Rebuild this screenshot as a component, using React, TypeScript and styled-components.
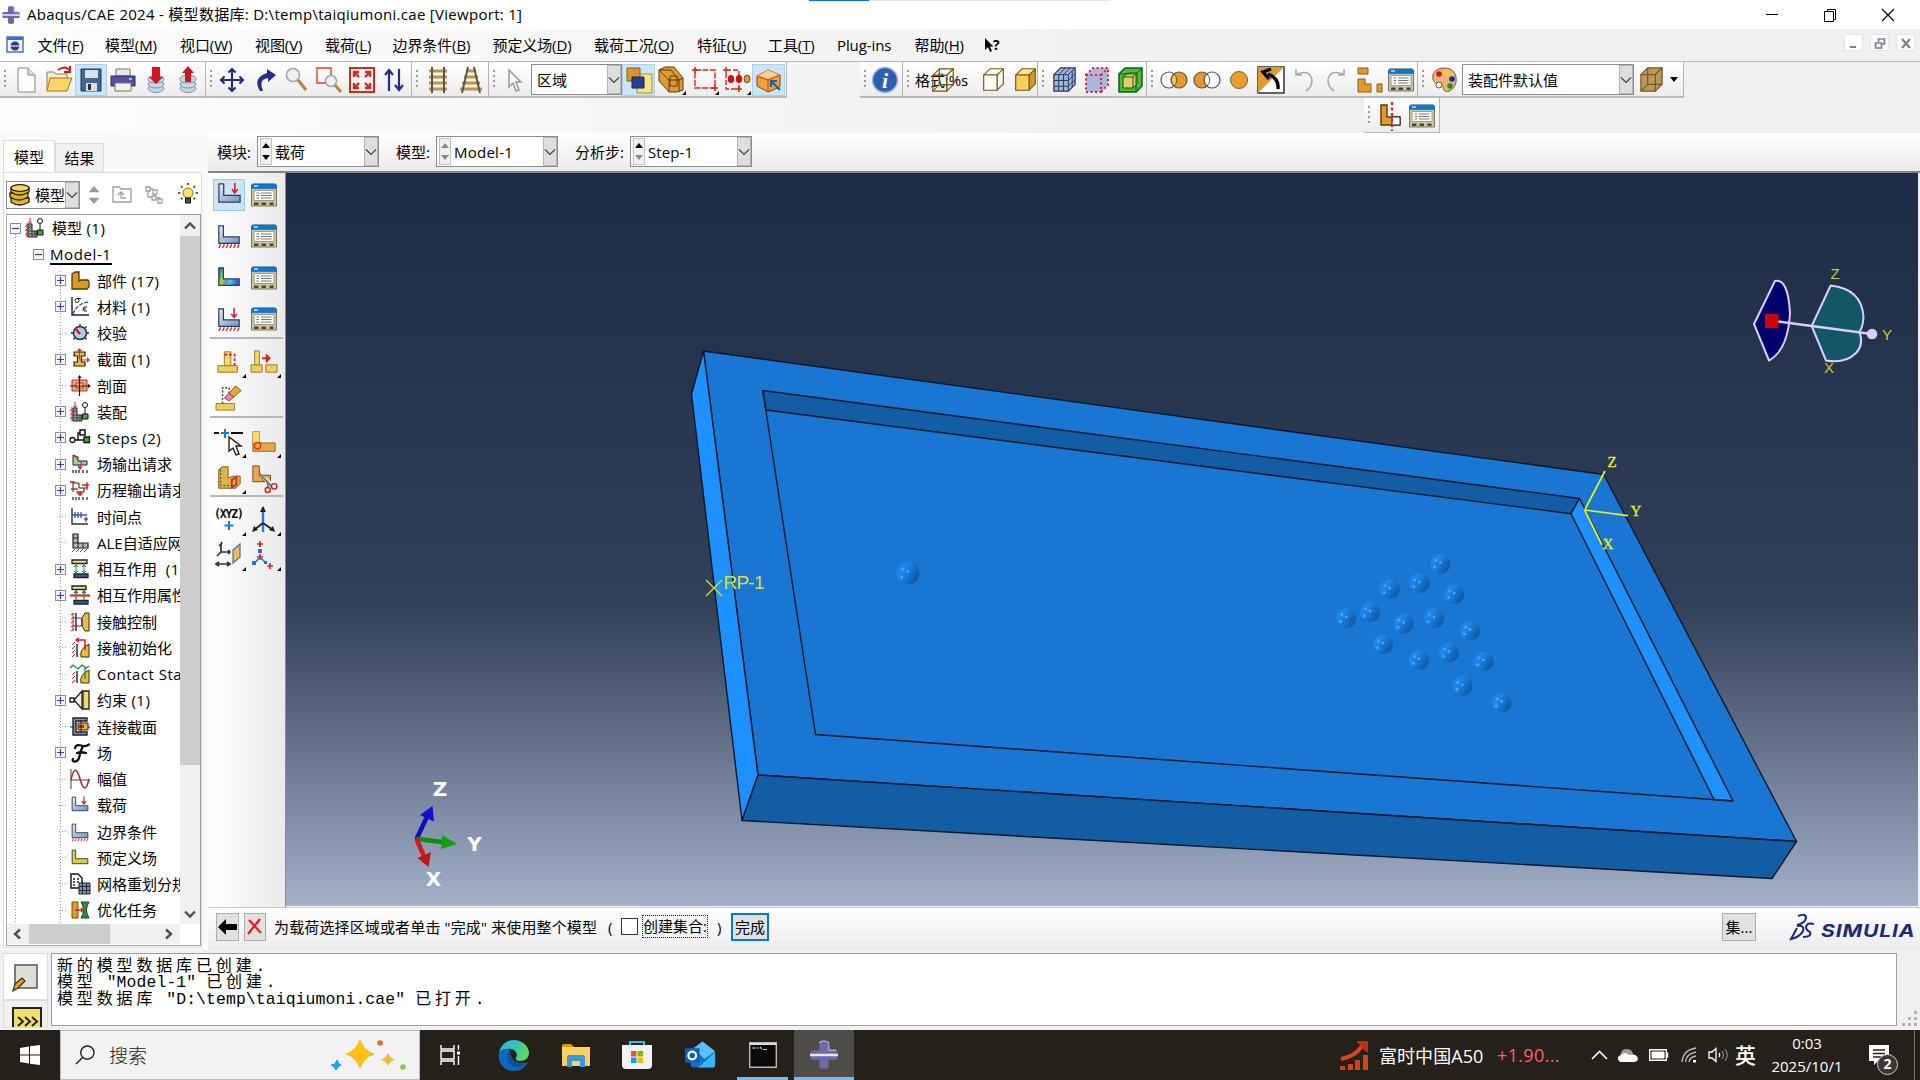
import React from "react";
import styled, { createGlobalStyle, css } from "styled-components";

const Global = createGlobalStyle`
  * { box-sizing: border-box; }
  html, body { margin: 0; padding: 0; overflow: hidden; }
  body {
    width: 1920px; height: 1080px;
    font-family: "Open Sans", "Noto Sans CJK SC", sans-serif;
    font-size: 15px; color: #000;
  }
  svg { display: block; flex: none; overflow: visible; }
`;

const Screen = styled.div`
  width: 1920px; height: 1080px; display: flex; flex-direction: column;
  background: linear-gradient(90deg, #fdfdfd, #f0f0f0 62%);
`;

/* ---------- title and menu ---------- */
const TitleBar = styled.header`
  height: 29px; background: #fff; display: flex; align-items: center; padding-left: 2px; position: relative;
`;
const TitleText = styled.span`margin-left: 7px; flex: 1; white-space: pre; letter-spacing: 0.29px; line-height: 29px;`;
const TopStrip = styled.div`
  position: absolute; left: 809px; top: 0; width: 301px; height: 1px;
  background: linear-gradient(90deg, #0078d7 60px, #e3e3e3 60px);
`;
const WindowButtons = styled.div`display: flex; gap: 42px; padding-right: 24px;`;
const MenuBar = styled.nav`height: 33px; display: flex; align-items: center; padding-left: 6px; border-bottom: 1px solid #b9b9bd;`;
const MenuItem = styled.span<{ $w: number }>`
  width: ${(p) => p.$w}px; flex: none; white-space: nowrap; line-height: 32px;
  letter-spacing: -0.1px;
  u { text-underline-offset: 2px; text-decoration-thickness: 1px; }
`;
const MdiButtons = styled.div`margin-left: auto; display: flex; gap: 7px; padding-right: 5px; padding-bottom: 5px;`;
const MdiButton = styled.span`width: 19px; height: 17px; background: #fff; border: 1px solid #e6e6e6; display: grid; place-items: center;`;

/* ---------- toolbars ---------- */
const ToolRow = styled.div<{ $h?: number }>`height: ${(p) => p.$h ?? 36}px; display: flex;`;
const ToolGroup = styled.div<{ $w: number; $ml?: number }>`
  width: ${(p) => p.$w}px; margin-left: ${(p) => p.$ml ?? 0}px; flex: none; height: 36px; display: flex; align-items: center;
  padding-top: 1px;
  background: linear-gradient(#fff, #ececec); border-bottom: 2px solid #bababa; border-right: 1px solid #b5b5b5;
`;
const Grip = styled.i<{ $gap?: number }>`
  width: 2px; height: 20px; margin: 0 ${(p) => p.$gap ?? 4}px 0 4px; flex: none;
  background: repeating-linear-gradient(#9a9a9a 0 2px, transparent 2px 5px);
`;
const ToolButton = styled.span<{ $on?: boolean; $w?: number }>`
  width: ${(p) => p.$w ?? 32.4}px; height: 32px; display: grid; place-items: center; flex: none;
  ${(p) => p.$on && css`background: #cce4f7; box-shadow: inset 0 0 0 1px #a9d1f2;`}
`;
const Combo = styled.div<{ $w: number; $h?: number }>`
  width: ${(p) => p.$w}px; height: ${(p) => p.$h ?? 31}px; flex: none; background: #fff; border: 1.5px solid #8c8c94;
  display: flex; align-items: center; overflow: hidden; white-space: nowrap;
`;
const ComboText = styled.span<{ $pl?: number; $ls?: number }>`
  flex: 1; min-width: 0; padding-left: ${(p) => p.$pl ?? 5}px; letter-spacing: ${(p) => p.$ls ?? 0}px;
`;
const ComboButton = styled.span`width: 14px; align-self: stretch; background: #dedede; border: 1px solid #b4b4b4; display: grid; place-items: center; flex: none;`;
const Overlap = styled.span`
  width: 70px; display: flex; align-items: center; position: relative; height: 32px; padding-left: 4px; white-space: nowrap; letter-spacing: -0.1px;
  svg { position: absolute; left: 19px; top: 3px; }
`;
const Gap = styled.span<{ $w: number }>`width: ${(p) => p.$w}px; flex: none;`;

/* ---------- body ---------- */
const Body = styled.div`height: 817px; display: flex;`;
const LeftPanel = styled.aside`width: 208px; flex: none; padding: 7px 0 0 3px; display: flex; flex-direction: column; background: #f9f9f9;`;
const Tabs = styled.div`display: flex; align-items: flex-end; height: 32px;`;
const Tab = styled.span<{ $active?: boolean }>`
  width: ${(p) => (p.$active ? 52 : 49)}px; height: ${(p) => (p.$active ? 32 : 29)}px; line-height: ${(p) => (p.$active ? 32 : 29)}px;
  text-align: center; border: 1px solid #dcdcdc; border-bottom: 0; background: ${(p) => (p.$active ? "#fff" : "#f0f0f0")};
`;
const Panel = styled.div`width: 199px; height: 776px; background: #fff; border: 1px solid #dcdcdc; padding: 7px 0 0 2px;`;
const PanelTools = styled.div`display: flex; align-items: center; height: 29px;`;
const TreeBox = styled.div`
  margin-top: 5px; width: 195px; height: 732px; border: 1.5px solid #9c9ca4; border-left-color: #a8a8b0; background: #fff;
  display: grid; grid-template: 709px 20px / 173px 20px;
`;
const Tree = styled.div`
  overflow: hidden; 
  background: repeating-linear-gradient(#9a9a9a 0 1px, transparent 1px 3px) 8px 16px / 1px 100% no-repeat,
    repeating-linear-gradient(#9a9a9a 0 1px, transparent 1px 3px) 53px 56px / 1px 100% no-repeat;
`;
const Row = styled.div<{ $pad: number }>`
  height: 26.24px; display: flex; align-items: center; padding-left: ${(p) => p.$pad}px; white-space: pre;
`;
const Expander = styled.i`
  width: 11px; height: 11px; flex: none; background: #f6f6f6; border: 1px solid #8f8f8f; display: grid; place-items: center;
`;
const Stub = styled.i`width: 7px; height: 1px; margin-left: 4px; flex: none; background: repeating-linear-gradient(90deg, #9a9a9a 0 1px, transparent 1px 3px);`;
const RowIcon = styled.span`width: 20px; height: 22px; margin: 0 7px 0 4px; display: grid; place-items: center; flex: none;`;
const RowText = styled.span<{ $root?: boolean }>`
  letter-spacing: ${(p) => (p.$root ? 0.6 : 0)}px; line-height: 20px;
  ${(p) => p.$root && css`border-bottom: 2px solid #000; height: 21px; margin-left: 6px;`}
`;
const Latin = styled.span`letter-spacing: 0.5px;`;
const VBar = styled.div`background: #f0f0f0; display: flex; flex-direction: column; align-items: center; justify-content: space-between;`;
const HBar = styled.div`background: #f0f0f0; display: flex; align-items: center; justify-content: space-between; padding: 0 6px 0 5px;`;
const VThumb = styled.i`width: 20px; height: 529px; background: #cdcdcd; margin-bottom: auto;`;
const HThumb = styled.i`width: 81px; height: 20px; background: #cdcdcd; margin-right: auto; margin-left: 5px;`;
const ArrowCell = styled.span`height: 21px; display: grid; place-items: center;`;

const Right = styled.main`flex: 1; display: flex; flex-direction: column; min-width: 0;`;
const ContextBar = styled.div`
  height: 40px; display: flex; align-items: center; padding-left: 9px; background: linear-gradient(#fff, #ebebeb); border-bottom: 2px solid #83838a;
  padding-bottom: 1px;
`;
const CtxLabel = styled.span<{ $w: number; $pl?: number }>`width: ${(p) => p.$w}px; padding-left: ${(p) => p.$pl ?? 0}px; flex: none; white-space: nowrap;`;
const Spinner = styled.span`width: 12px; align-self: stretch; margin: 1px 0 1px 2px; border: 1px solid #c4c4c4; background: #f1f1f1; display: flex; flex-direction: column; justify-content: space-around; align-items: center; flex: none;`;
const Work = styled.div`display: flex; height: 734px;`;
const ToolBox = styled.div`width: 78px; flex: none; padding: 5px 2px 0 2px; border-right: 1px solid #8b8b93; background: linear-gradient(90deg, #fff, #eaeaea);`;
const ToolPair = styled.div<{ $h: number }>`height: ${(p) => p.$h}px; display: flex; align-items: center; padding-left: 3px; gap: 3px;`;
const PairCell = styled.span<{ $on?: boolean }>`
  width: 32px; height: 32px; display: grid; place-items: center; flex: none; position: relative;
  ${(p) => p.$on && css`background: #cce4f7; box-shadow: inset 0 0 0 1px #99cbf0;`}
`;
const Corner = styled.i`position: absolute; right: -1px; bottom: 0; width: 0; height: 0; border-left: 4px solid transparent; border-bottom: 4px solid #000;`;
const Rule = styled.hr<{ $mt: number }>`margin: ${(p) => p.$mt}px 0 0; border: 0; height: 2px; background: #b7b7b7;`;
const Viewport = styled.div`
  width: 1632px; flex: none; height: 733px;
  background: linear-gradient(#1c2c46 0%, #26364e 30%, #2f4058 58%, #48566f 68%, #72809a 83%, #a2b1c8 100%);
`;
const Prompt = styled.div`
  height: 43px; display: flex; align-items: center; padding: 0 5px 5px 8px; background: linear-gradient(#fff, #ebebeb); border-top: 1px solid #c9c9c9; white-space: nowrap;
`;
const PromptText = styled.span<{ $w: number; $ml?: number }>`width: ${(p) => p.$w}px; margin-left: ${(p) => p.$ml ?? 0}px; letter-spacing: 0.14px; flex: none;`;
const PushButton = styled.span<{ $w: number; $focus?: boolean; $ml?: number }>`
  width: ${(p) => p.$w}px; height: 28px; margin-left: ${(p) => p.$ml ?? 0}px; flex: none; background: #e1e1e1;
  border: ${(p) => (p.$focus ? "2px solid #0078d7" : "1.5px solid #adadad")}; display: grid; place-items: center; line-height: 20px;
`;
const SetArea = styled.div`margin-left: auto; width: 193px; display: flex; align-items: center; flex: none; gap: 34px;`;
const CheckBox = styled.i`width: 17px; height: 17px; border: 1.5px solid #333; background: #fff; flex: none;`;
const FocusLabel = styled.span`border: 1px dotted #222; height: 23px; line-height: 20px; width: 66px; margin-left: 4px; flex: none;`;
const Brand = styled.div`display: flex; align-items: center; gap: 6px;`;
const Simulia = styled.span`
  font: italic 700 17px "Inter", sans-serif; color: #1b2a7b; margin-top: 8px; letter-spacing: 0.7px;
  transform: scaleX(1.24); transform-origin: left;
`;

/* ---------- message area ---------- */
const Messages = styled.section`height: 80px; background: #f0f0f0; display: flex; padding-top: 3px;`;
const MsgTabs = styled.div`width: 48px; padding-left: 3px; display: flex; flex-direction: column;`;
const MsgTab = styled.div<{ $active?: boolean }>`
  height: ${(p) => (p.$active ? 47 : 28)}px; background: ${(p) => (p.$active ? "#fff" : "#f0f0f0")}; border: 1px solid #dcdcdc;
  padding: ${(p) => (p.$active ? "10px 0 0 8px" : "6px 0 0 8px")}; overflow: hidden;
`;
const MsgBox = styled.div`
  margin-left: 3px; width: 1846px; height: 73px; background: #fff; border: 1.5px solid #9c9ca4; padding: 5px 0 0 5px;
  font-family: "Liberation Mono", "Noto Sans CJK SC", monospace; font-size: 16.4px; letter-spacing: 0.12px;
`;
const MsgLine = styled.div`height: 16.4px; line-height: 16.4px; white-space: pre;`;
const Wide = styled.span`font-size: 16px; letter-spacing: 3.85px;`;
const SizeGrip = styled.div`width: 15px; align-self: flex-end; margin: 0 0 4px 6px;`;

/* ---------- taskbar ---------- */
const Taskbar = styled.footer`height: 50px; background: #25211a; display: flex; align-items: center; color: #fff;`;
const StartCell = styled.span`width: 60px; display: grid; place-items: center;`;
const Search = styled.div`width: 360px; height: 50px; background: #f2f2f2; border: 1px solid #bbb; display: flex; align-items: center; padding-left: 14px; color: #222; font-size: 19px;`;
const SearchText = styled.span`width: 221px; margin-left: 14px; font-weight: 300;`;
const TaskCell = styled.span<{ $on?: boolean; $line?: boolean; $w?: number }>`
  width: ${(p) => p.$w ?? 62}px; height: 50px; display: grid; place-items: center; flex: none;
  ${(p) => p.$on && css`background: #4f4c47;`}
  ${(p) => p.$line && css`box-shadow: inset 0 -3px #76b9ed;`}
`;
const Tray = styled.div`margin-left: auto; display: flex; align-items: center; height: 50px; white-space: nowrap;`;
const Stock = styled.span`font-size: 18px; margin-left: 11px; width: 118px; letter-spacing: 0.05px;`;
const Change = styled.span`font-size: 18px; color: #ff5f66; width: 89px; letter-spacing: 0.35px;`;
const TrayCell = styled.span<{ $w: number }>`width: ${(p) => p.$w}px; display: grid; place-items: center;`;
const Ime = styled.span`font-size: 21px; width: 30px; margin-left: 3px; font-weight: 500; line-height: 26px;`;
const Clock = styled.span`width: 84px; text-align: center; font-size: 15px; line-height: 23px;`;
const Notice = styled.span`width: 57px; height: 50px; margin-left: 9px; border-right: 1px solid #777; position: relative; padding: 15px 0 0 11px;`;
const Badge = styled.b`
  position: absolute; left: 19px; top: 24px; width: 21px; height: 21px; border-radius: 50%; border: 1px solid #ccc; background: #3b3833;
  font-size: 14px; line-height: 18px; text-align: center;
`;

/* ---------- drawings ---------- */
type P = { s?: number; children: React.ReactNode; w?: number; h?: number; box?: string };
const I = ({ s = 28, w, h, box = "0 0 28 28", children }: P) => (
  <svg width={w ?? s} height={h ?? s} viewBox={box} fill="none">{children}</svg>
);
const Down = ({ c = "#444" }: { c?: string }) => (
  <I w={12} h={10} box="0 0 12 10"><path d="M1 2.5 6 7.5 11 2.5" stroke={c} strokeWidth="1.2" /></I>
);
const Scroll = ({ d }: { d: string }) => (
  <I s={12} box="0 0 12 12"><path d={d} stroke="#505050" strokeWidth="2.4" /></I>
);
const Tri = ({ up, c = "#000" }: { up?: boolean; c?: string }) => (
  <I w={8} h={5} box="0 0 8 5"><path d={up ? "M0 5 4 0 8 5Z" : "M0 0 4 5 8 0Z"} fill={c} /></I>
);
const Manager = ({ s = 26 }: { s?: number }) => (
  <I s={s} box="0 0 26 26">
    <path d="M.5 4Q.5 2 2.500 2H23.500Q25.500 2 25.500 4V24H.5Z" fill="#cbc4a3" stroke="#7d775a" />
    <path d="M.5 6.500V4Q.5 2 2.500 2H23.500Q25.500 2 25.500 4V6.500Z" fill="#0a78d4" stroke="#0a68ba" strokeWidth=".6" />
    <path d="M3 4H7" stroke="#d9efff" strokeWidth="1.300" />
    <path d="M3 8.500H23V18.500H3Z" fill="#fff" stroke="#a49e7e" />
    <path d="M5.500 11H8M5.500 13.500H8M5.500 16H8M10 11H20.500M10 13.500H20.500M10 16H20.500" stroke="#777" />
    <path d="M3 20.500H7.500V23H3ZM10.500 20.500H15V23H10.500ZM18.500 20.500H22.500V23H18.500Z" fill="#4c4829" />
  </I>
);
const L = "M3 3H8V15H25V22H3Z";
const LoadIcon = ({ s = 28, arrow, feet, field, full }: { s?: number; arrow?: boolean; feet?: boolean; field?: boolean; full?: string }) => (
  <I s={s}>
    <defs>
      <linearGradient id="lblue" x1="0" y1="0" x2="1" y2="1"><stop stopColor="#e1ebf9" /><stop offset="1" stopColor="#7292c9" /></linearGradient>
      <linearGradient id="lrain" x1="0" y1="0" x2="1" y2=".35"><stop stopColor="#2846e8" /><stop offset=".3" stopColor="#5fe05a" /><stop offset=".42" stopColor="#f0a040" /><stop offset=".55" stopColor="#5f8be0" /><stop offset=".75" stopColor="#3bd6c5" /><stop offset="1" stopColor="#3b62e0" /></linearGradient>
    </defs>
    <path d={L} fill={full ?? (field ? "url(#lrain)" : "url(#lblue)")} stroke="#333d50" strokeWidth="1.3" />
    {arrow && <path d="M19.500 2V12M16.500 8.500 19.500 12.500 22.500 8.500" stroke="#cc1e1e" strokeWidth="1.6" />}
    {feet && <path d="M5 23 3 27M9 23 7 27M13 23 11 27M17 23 15 27M21 23 19 27M25 23 23 27" stroke="#d02418" strokeWidth="1.4" />}
  </I>
);
const Cube = ({ front = "none", top = front, side = front, line = "#7a5a17", inner, s = 28 }: { front?: string; top?: string; side?: string; line?: string; inner?: boolean; s?: number }) => (
  <I s={s}>
    <g stroke={line} strokeWidth="1.3" strokeLinejoin="round">
      <path d="M3 9 10 2H25L18 9Z" fill={top} />
      <path d="M18 9 25 2V19L18 26Z" fill={side} />
      <path d="M3 9H18V26H3Z" fill={front} />
      {inner && <path d="M10 2V19H25M10 19 3 26" />}
    </g>
  </I>
);
const DbIcon = ({ up }: { up?: boolean }) => (
  <I>
    <g fill="#c9d6e6" stroke="#8093ac"><ellipse cx="14" cy="22.500" rx="8" ry="4" /><ellipse cx="14" cy="18" rx="8" ry="4" /><ellipse cx="14" cy="13" rx="8" ry="4" /></g>
    {up ? <path d="M14 0 20 7H17V16H11V7H8Z" fill="#cf1420" /> : <path d="M10 1H18V11H21L14 18 7 11H10Z" fill="#cf1420" />}
  </I>
);
const Ovals = ({ a, b }: { a: string; b: string }) => (
  <I><circle cx="9" cy="14" r="8" fill={a} stroke="#555" strokeWidth="1.2" /><circle cx="19" cy="14" r="8" fill={b} stroke="#555" strokeWidth="1.2" /><path d="M14 8A8 8 0 0 1 14 20 8 8 0 0 1 14 8Z" fill={b === "#fff" ? "#fff" : "#ffc04d"} stroke="#555" /></I>
);
const AppIcon = ({ s = 18 }: { s?: number }) => (
  <I s={s} box="0 0 18 18"><path d="M6 1Q9-1 12 1V6H17Q19 9 17 12H12V17Q9 19 6 17V12H1Q-1 9 1 6H6Z" fill="#6b69a8" /><path d="M6 1Q9-1 12 1V6H17" stroke="#a5a4d0" /><path d="M0 9H18" stroke="#e6e6f5" strokeWidth="1.6" /></I>
);

/* small icons of the model tree, drawn on a 20 by 20 grid */
const treeIcons: Record<string, React.ReactNode> = {
  model: <><path d="M2 5V19M2 7 0 9M2 11 0 13M2 15 0 17M5 0V5M3.500 3.500 5 5.500 6.500 3.500" stroke="#d22" /><path d="M3 6H7V13H12V19H3Z" fill="#999" stroke="#222" /><path d="M3 9H7M3 13H7M3 16H12M7 13V19M10 13V19" stroke="#333" strokeWidth=".8" /><circle cx="15" cy="3" r="2.500" stroke="#111" fill="#fff" /><path d="M15 6V12" stroke="#111" /><path d="M12.500 12H18V17H12.500Z" fill="#3bab35" stroke="#111" /></>,
  part: <path d="M2 3 5 1H9V10L11 9H18L19 11V16L17 18H2Z" fill="#d99a25" stroke="#54370a" strokeWidth="1.3" />,
  material: <><path d="M2 0V18H19" stroke="#222" strokeWidth="1.4" /><path d="M3 17Q7 6 19 5" stroke="#2b43a8" strokeWidth="1.3" strokeDasharray="4 1.500" /><circle cx="7" cy="3.500" r="2" stroke="#222" /><path d="M7 1.500H11M17 10Q13 9 13 12 13 15 17 14M13 12H16" stroke="#222" /></>,
  calib: <><circle cx="10" cy="10" r="6.500" fill="#b9cbe8" stroke="#1c2c50" strokeWidth="1.5" /><path d="M10 11 5 5" stroke="#d01818" strokeWidth="2.400" /><path d="M10 1V3.500M16.500 3.500 15 5M19 10H16.500M16.500 16.500 15 15M3.500 16.500 5 15M1 10H3.500" stroke="#1c2c50" strokeWidth="1.400" /></>,
  section: <><path d="M4 3H15V7H11.500V13H15V17H4V13H7.500V7H4Z" fill="#e9bf42" stroke="#222" strokeWidth="1.200" /><path d="M9.500 10V0M7.500 2 9.500 0 11.500 2M9.500 11H19M17 9 19 11 17 13" stroke="#d22" strokeWidth="1.200" /></>,
  profile: <><path d="M2 4H17V15H2Z" fill="#f2a17e" stroke="#c3301c" /><path d="M6 7H13V12H6Z" fill="#ffdc90" stroke="#c3301c" /><path d="M0 10H20M9.500 0V20M18 8.500 20 10 18 11.500M8 2 9.500 0 11 2" stroke="#222" strokeWidth="1.200" /></>,
  steps: <><circle cx="2.500" cy="12" r="2.500" stroke="#111" strokeWidth="1.300" /><path d="M5 12H14M8 12V5H10" stroke="#111" strokeWidth="1.400" /><path d="M10 2H15V7H10Z" fill="#fff" stroke="#111" strokeWidth="1.500" /><path d="M14 9H19.500V14.500H14Z" fill="#3bab35" stroke="#111" strokeWidth="1.300" /></>,
  field: <><path d="M3 1 8 3V7H17V11H3Z" fill="#8bd69a" stroke="#222" /><path d="M3 1 12 10" stroke="#d22" /><path d="M10 10V14M8 12 10 15 12 12" stroke="#d22" strokeWidth="1.300" /><path d="M3 16V19M6 16V19M9 16V19M13 16V19M17 16V19" stroke="#222" strokeWidth="1.300" /></>,
  history: <><path d="M3 1V12M3 3H9V8H17V4M6 12H14V8" stroke="#222" /><path d="M0 2H5M17 2V10M1 9H8M12 5H19M10 11V15M7.500 12.500 10 15.500 12.500 12.500" stroke="#d22" strokeWidth="1.300" /><path d="M3 17V20M6 17V20M9 17V20M13 17V20M17 17V20" stroke="#222" strokeWidth="1.200" /></>,
  time: <><path d="M2 1V17H18" stroke="#333" strokeWidth="1.400" /><path d="M2 8H17M5 5V11M8 5V11M11 5V11" stroke="#35a" strokeWidth="1.300" /><path d="M16 10V15M14 12H18" stroke="#222" /></>,
  ale: <><path d="M3 1H8V10H18V15H3Z" fill="#a9b6cc" stroke="#222" strokeWidth="1.200" /><path d="M3 5H8M3 10H8V15M13 10V15" stroke="#222" /><path d="M5 16 2 19M9 16 6 19M13 16 10 19M17 16 14 19" stroke="#d22" /></>,
  inter: <><path d="M2 1H17V4.500H2Z" fill="#f4e07e" stroke="#222" strokeWidth="1.300" /><path d="M4 15H18V18.500H4Z" fill="#3a58b0" stroke="#222" strokeWidth="1.300" /><path d="M6 5V14M14 5V14M4 8 6 6 8 8M12 8 14 6 16 8M4 12 6 14 8 12M12 12 14 14 16 12" stroke="#168a44" /></>,
  interp: <><path d="M2 1H16V4.500H2Z" fill="#f4e07e" stroke="#222" strokeWidth="1.300" /><path d="M4 15.500H18V19H4Z" fill="#3a58b0" stroke="#222" strokeWidth="1.300" /><path d="M6 5V15M14 5V15M4 8 6 6 8 8M12 8 14 6 16 8" stroke="#168a44" strokeWidth="1.200" /><path d="M0 10.500H20" stroke="#d33" strokeWidth="2.300" /></>,
  contact: <><path d="M3 1V19M1 3 4 1M1 7 4 5M1 11 4 9M1 15 4 13M1 19 4 17" stroke="#d22" /><path d="M19 1V19H15Q8 10 15 1Z" fill="#e6bd3e" stroke="#3b2f08" /><path d="M6 1V19" stroke="#222" strokeWidth="1.400" /><path d="M3 6H12M3 14H12M12 6V14" stroke="#42b" strokeWidth="1.200" /></>,
  init: <><path d="M2 19 5 16M2 15 5 12M2 11 5 8M2 7 5 4" stroke="#d22" /><path d="M7 6V19" stroke="#222" strokeWidth="1.400" /><path d="M19 6V19H11Q9 11 19 6Z" fill="#e6bd3e" stroke="#3b2f08" /><path d="M15 12V2H7M9 0 6 2 9 4" stroke="#d22" strokeWidth="1.500" /></>,
  std: <><path d="M2 19 5 16M2 15 5 12M2 11 5 8" stroke="#d22" /><path d="M7 7V19" stroke="#222" strokeWidth="1.400" /><path d="M19 6V19H11Q9 11 19 6Z" fill="#e6bd3e" stroke="#3b2f08" /><path d="M0 4 3 1 8 5 12 1 16 4 19 2M15 4V15" stroke="#168a44" strokeWidth="1.300" /></>,
  constraint: <><path d="M0 8H4V12H0ZM4 10 12 1V19L4 10" stroke="#222" strokeWidth="1.300" fill="#eee" /><path d="M13 1H19V19H13Z" fill="#f2d765" stroke="#222" strokeWidth="1.300" /></>,
  connector: <><path d="M3 1H17V4H6V15H17V18H3Z" fill="#8091b0" stroke="#222" strokeWidth="1.400" /><path d="M8 6H18V13H8Z" fill="#e3b93e" stroke="#222" /><path d="M8 9.500H14" stroke="#d22" strokeWidth="3" /><path d="M0 10H4M18 10H20M11 3V16" stroke="#222" /></>,
  func: <path d="M5 5Q6 1 11 2.500 16 4 19 1.500M13 3Q10 9 9.500 13 8.500 19 4 18.500 2 18 3 16M7 10Q11 8.500 16 10" stroke="#111" strokeWidth="2.300" strokeLinecap="round" />,
  amp: <><path d="M1 0V20M0 11H20" stroke="#444" /><path d="M1 11Q5-8 10 10 15 28 19 10" stroke="#b62a2a" strokeWidth="1.600" /></>,
  mesh: <><path d="M1 0H8L12 4V14H1Z" fill="#fff" stroke="#111" strokeWidth="1.400" /><path d="M3 5H5M7 5H9M3 8H5M7 8H9M3 11H5" stroke="#222" strokeWidth="1.400" /><path d="M9 9H20V20H9Z" fill="#7b93c0" stroke="#222" /><path d="M12.500 9V20M16.500 9V20M9 12.500H20M9 16.500H20" stroke="#222" /></>,
  opt: <><path d="M2 2H8V18H2Z" fill="#e19a2c" stroke="#7a4b0c" /><path d="M11 2H19Q14 10 19 18H11Q16 10 11 2Z" fill="#2d8c3c" stroke="#14521e" /><path d="M5 10H13M11 8 13 10 11 12" stroke="#d22" strokeWidth="1.400" /></>,
};
const treeIcon = (n: string) => {
  if (n === "load") return <LoadIcon s={20} arrow />;
  if (n === "bc") return <LoadIcon s={20} feet />;
  if (n === "pre") return <LoadIcon s={20} full="#d9cf3a" />;
  return <I s={20} box="0 0 20 20">{treeIcons[n]}</I>;
};

const treeRows: [string, string, string, boolean][] = [
  ["part", "部件", " (17)", true], ["material", "材料", " (1)", true], ["calib", "校验", "", false], ["section", "截面", " (1)", true],
  ["profile", "剖面", "", false], ["model", "装配", "", true], ["steps", "", "Steps (2)", true], ["field", "场输出请求", "", true],
  ["history", "历程输出请求", "", true], ["time", "时间点", "", false], ["ale", "ALE自适应网", "", false], ["inter", "相互作用", "  (1", true],
  ["interp", "相互作用属性", "", true], ["contact", "接触控制", "", false], ["init", "接触初始化", "", false], ["std", "", "Contact Sta", false],
  ["constraint", "约束", " (1)", true], ["connector", "连接截面", "", false], ["func", "场", "", true], ["amp", "幅值", "", false],
  ["load", "载荷", "", false], ["bc", "边界条件", "", false], ["pre", "预定义场", "", false], ["mesh", "网格重划分规", "", false], ["opt", "优化任务", "", false],
];

const PlusMinus = ({ plus }: { plus?: boolean }) => (
  <Expander><I s={7} box="0 0 7 7"><path d={plus ? "M0 3.5H7M3.5 0V7" : "M0 3.5H7"} stroke="#2c4a9c" strokeWidth="1.2" /></I></Expander>
);

const menus: [string, string, number][] = [
  ["文件", "F", 67.5], ["模型", "M", 75], ["视口", "W", 75], ["视图", "V", 70], ["载荷", "L", 67.5], ["边界条件", "B", 100], ["预定义场", "D", 101.5],
  ["载荷工况", "O", 103], ["特征", "U", 71], ["工具", "T", 69], ["Plug-ins", "", 77.5], ["帮助", "H", 69],
];

const Spin = ({ dim, dim2 }: { dim?: boolean; dim2?: boolean }) => (
  <Spinner><Tri up c={dim ? "#888" : "#000"} /><Tri c={dim || dim2 ? "#888" : "#000"} /></Spinner>
);

const balls = [[1440.4, 563.7], [1419.4, 583.3], [1389.8, 589.3], [1454.2, 594.3], [1346.3, 618], [1370, 612.3], [1403.6, 623.7], [1434, 618.3], [1470, 630.7], [1383, 644.3], [1419, 660], [1449, 652.7], [1483.5, 661.3], [1462.5, 686], [1501.7, 702.7]];
const Ball = ({ x, y, r = 10 }: { x: number; y: number; r?: number }) => (
  <g>
    <circle cx={x} cy={y} r={r} fill="url(#ball)" />
    <g fill="#4aa6fb"><circle cx={x - r * 0.45} cy={y - r * 0.35} r="1.4" /><circle cx={x} cy={y - r * 0.12} r="1.4" /><circle cx={x - r * 0.55} cy={y + r * 0.35} r="1.4" /></g>
  </g>
);

const Scene = () => (
  <svg width="1632" height="733" viewBox="286 173 1632 733" fill="none">
    <defs>
      <linearGradient id="ball" x1="0" y1=".2" x2="1" y2=".8"><stop offset=".3" stopColor="#1c86ee" /><stop offset="1" stopColor="#0f5193" /></linearGradient>
    </defs>
    <g stroke="#06182b" strokeWidth="1.4" strokeLinejoin="round">
      <path d="M703.500 351 1603.700 474.500 1796.500 841.500 758 775Z" fill="#1976d2" />
      <path d="M703.500 351 691.500 394 742 820.500 758 775Z" fill="#1e90ff" />
      <path d="M742 820.500 758 775 1796.500 841.500 1772 878.500Z" fill="#135da4" />
      <path d="M762.800 390.500 1579.500 498.500 1571 513.700 766 410Z" fill="#135da4" />
      <path d="M1579.500 498.500 1733 801 1714 799.500 1571 513.700Z" fill="#1e90ff" />
      <path d="M762.800 390.500 815.500 734.500 1733 801" />
    </g>
    <Ball x={908} y={573} r={11.5} />
    {balls.map(([x, y]) => <Ball key={`${x}`} x={x} y={y} />)}
    <g stroke="#e6ee1c" strokeWidth="1.7"><path d="M1584.700 510 1605 471M1584.700 510 1628 515.700M1584.700 510 1602 545" /></g>
    <path d="M706 580 722 596M722 580 706 596" stroke="#d8df1e" strokeWidth="1.3" />
    <text x="723.500" y="588.500" fill="#d5e03a" fontFamily="Liberation Sans, sans-serif" fontSize="19" textLength="41">RP-1</text>
    <g fill="#e6ee1c" fontFamily="Liberation Serif, serif" fontSize="15" textAnchor="middle" stroke="#e6ee1c" strokeWidth=".3">
      <text x="1612" y="467">Z</text><text x="1636" y="516">Y</text><text x="1608" y="549">X</text>
    </g>
    <g stroke="#dccbff" strokeWidth="2" strokeLinejoin="round">
      <path d="M1775 281Q1788 278 1790 313 1788 350 1769 360.500L1754 324Z" fill="#00006a" />
      <path d="M1830.600 285.500Q1862 289 1863.500 317 1863 327 1859.500 331.700 1864 345 1856 353 1845 364 1826 360.500L1811.700 326Z" fill="#135766" />
      <path d="M1778 321.500 1868 333.500" strokeWidth="2.500" />
    </g>
    <circle cx="1872" cy="334" r="5.300" fill="#dccbff" />
    <path d="M1765 314H1778.500V328H1765Z" fill="#cf0404" />
    <g fill="#d8c81c" fontFamily="Liberation Sans, sans-serif" fontSize="15" textAnchor="middle">
      <text x="1835" y="278.500">Z</text><text x="1887" y="339.500">Y</text><text x="1829" y="373">X</text>
    </g>
    <g strokeLinecap="round">
      <path d="M417 838 426 819" stroke="#1010b8" strokeWidth="4.500" /><path d="M420 815 432.500 806 434 821.500Z" fill="#1010c8" />
      <path d="M418 839 442 842" stroke="#0a900a" strokeWidth="4.500" /><path d="M442 835 457 844 441 849Z" fill="#12a012" />
      <path d="M417 840 423 854" stroke="#d01818" strokeWidth="4.500" /><path d="M417.500 858 431 852 428.500 867Z" fill="#c01515" />
    </g>
    <g fill="#fff" fontFamily="DejaVu Sans, sans-serif" fontWeight="700" fontSize="20" textAnchor="middle">
      <text x="440" y="795.500">Z</text><text x="474.500" y="851">Y</text><text x="433.500" y="885.500">X</text>
    </g>
  </svg>
);

const BlueArrow = ({ d }: { d: string }) => <I><path d={d} stroke="#262c8c" strokeWidth="2.2" /></I>;

export default function App() {
  return (
    <Screen>
      <Global />
      <TitleBar>
        <TopStrip />
        <AppIcon />
        <TitleText>Abaqus/CAE 2024 - 模型数据库: D:\temp\taiqiumoni.cae [Viewport: 1]</TitleText>
        <WindowButtons>
          <I w={16} h={14} box="0 0 16 14"><path d="M2 6.500H14" stroke="#000" /></I>
          <I w={16} h={14} box="0 0 16 14"><path d="M2.500 3.500H11.500V13.500H2.500ZM5.500 3.500V1.500H13.500V11.500H11.500" stroke="#000" /></I>
          <I w={16} h={14} box="0 0 16 14"><path d="M2 1 14 13M14 1 2 13" stroke="#000" strokeWidth="1.200" /></I>
        </WindowButtons>
      </TitleBar>
      <MenuBar>
        <MenuItem $w={31.5}>
          <I s={18} box="0 0 18 18"><path d="M1 1H17V16H1Z" fill="#f0f4ff" stroke="#4b70c8" strokeWidth="1.500" /><path d="M1 1H17V4H1Z" fill="#3a6fd8" /><circle cx="9" cy="10" r="4.500" fill="#37378f" /><path d="M4 10H14" stroke="#fff" /></I>
        </MenuItem>
        {menus.map(([t, k, w]) => <MenuItem key={t} $w={w}>{t}{k && <>(<u>{k}</u>)</>}</MenuItem>)}
        <I w={18} h={16} box="0 0 18 16"><path d="M1 1V13L4 10 6 15 8 14 6 9.500H9.500Z" fill="#000" /><text x="9" y="12.500" fill="#000" fontSize="14" fontWeight="700">?</text></I>
        <MdiButtons>
          <MdiButton><I s={12} box="0 0 12 12"><path d="M2 10H8" stroke="#738296" strokeWidth="2" /></I></MdiButton>
          <MdiButton><I s={12} box="0 0 12 12"><path d="M1.500 6H7.500V11H1.500ZM4.500 5V2H10.500V7H8" stroke="#738296" strokeWidth="1.700" /></I></MdiButton>
          <MdiButton><I s={12} box="0 0 12 12"><path d="M2 2 10 11M10 2 2 11" stroke="#738296" strokeWidth="2.200" /></I></MdiButton>
        </MdiButtons>
      </MenuBar>
      <ToolRow>
        <ToolGroup $w={206}>
          <Grip />
          <ToolButton><I><path d="M6 2H16L23 9V26H6Z" fill="#fdfdff" stroke="#888" /><path d="M16 2V9H23" fill="#dde" stroke="#888" /></I></ToolButton>
          <ToolButton><I><path d="M2 24V6H9L11 8H22V24Z" fill="#f3ead0" stroke="#8b7a4c" /><path d="M5 12H27L22 25H2Z" fill="#ffd466" stroke="#a37818" /><path d="M13 4Q20-1 24 4M25 0V6H19" stroke="#d01a1a" strokeWidth="2" /></I></ToolButton>
          <ToolButton $on><I><path d="M4 3H24V25H4Z" fill="#41668f" stroke="#1f3a5b" /><path d="M8 4H21V12H8Z" fill="#d7e2ee" /><path d="M9 17H20V25H9Z" fill="#ddd" /><path d="M11 18H14V24H11Z" fill="#234" /></I></ToolButton>
          <ToolButton><I><path d="M7 3H21V10H7Z" fill="#e8e8ee" stroke="#777" /><path d="M2 10H26V20H2Z" fill="#52529e" stroke="#2a2a66" /><path d="M6 17H22V25H6Z" fill="#f3f3f3" stroke="#777" /><path d="M20 13H23" stroke="#5f5" strokeWidth="2" /></I></ToolButton>
          <ToolButton><DbIcon /></ToolButton>
          <ToolButton><DbIcon up /></ToolButton>
        </ToolGroup>
        <ToolGroup $w={206}>
          <Grip />
          <ToolButton><BlueArrow d="M14 3V25M3 14H25M10.500 6.500 14 3 17.500 6.500M10.500 21.500 14 25 17.500 21.500M6.500 10.500 3 14 6.500 17.500M21.500 10.500 25 14 21.500 17.500" /></ToolButton>
          <ToolButton><I><path d="M9 25Q1 12 16 7V3L25 9 17 16V12Q7 13 12 25Z" fill="#262c8c" /></I></ToolButton>
          <ToolButton><I><circle cx="10" cy="9" r="6.500" fill="#eef1f4" stroke="#a5a5a5" strokeWidth="1.500" /><path d="M15 14 23 24" stroke="#b08a3c" strokeWidth="3.200" /></I></ToolButton>
          <ToolButton><I><path d="M2 2H16V17H2Z" stroke="#d42" strokeWidth="1.400" /><circle cx="16" cy="15" r="5.500" fill="#eef1f4" stroke="#a5a5a5" strokeWidth="1.500" /><path d="M20 19 26 26" stroke="#b08a3c" strokeWidth="3" /></I></ToolButton>
          <ToolButton><I><path d="M2 2H26V26H2Z" stroke="#cf2a1c" strokeWidth="2" /><path d="M6 11V6H11M17 6H22V11M22 17V22H17M11 22H6V17M6 6 11 11M22 6 17 11M22 22 17 17M6 22 11 17" stroke="#cf2a1c" strokeWidth="2.400" /></I></ToolButton>
          <ToolButton><BlueArrow d="M9 25V5M5 9 9 4 13 9M19 3V23M15 19 19 24 23 19" /></ToolButton>
        </ToolGroup>
        <ToolGroup $w={77}>
          <Grip />
          <ToolButton><I><path d="M5 5H23M5 11H23M5 17H23M5 23H23" stroke="#c4913a" strokeWidth="2.800" /><path d="M8 1V27M20 1V27" stroke="#555" strokeWidth="2" /></I></ToolButton>
          <ToolButton><I><path d="M9 5H19M7 11H21M5 17H23M3 23H25" stroke="#c4913a" strokeWidth="2.800" /><path d="M11 1 5 27M17 1 23 27" stroke="#555" strokeWidth="2" /></I></ToolButton>
        </ToolGroup>
        <ToolGroup $w={298}>
          <Grip $gap={0} />
          <ToolButton $w={36}><I><path d="M10 4V21L14 17 17 25 20 24 17 16H22Z" fill="#f8f8f8" stroke="#999" strokeWidth="1.500" /></I></ToolButton>
          <Combo $w={91}><ComboText>区域</ComboText><ComboButton><Down /></ComboButton></Combo>
          <ToolButton $on $w={33}><I><path d="M12 8H27V27H12Z" fill="#f3e389" stroke="#a0903a" /><path d="M2 2H15V15H2Z" fill="#d9962a" stroke="#8a5c12" /><path d="M7 11H19V22H7Z" fill="#2d3c90" stroke="#18205a" /></I></ToolButton>
          <ToolButton><I><path d="M2 4 8 1H17L26 12V24L20 26H12L2 15Z" fill="#dc9b31" stroke="#5e3d0b" /><path d="M2 4 12 14V26M12 14H22L14 4H2M22 14V26M22 14 26 12M13 10H20V20H13Z" stroke="#5e3d0b" /><path d="M29 29V25L25 29Z" fill="#000" /></I></ToolButton>
          <ToolButton><I><path d="M5 4H25V22H5Z" stroke="#d22a1c" strokeWidth="1.400" strokeDasharray="6 1.500" /><path d="M2 4H8M5 1V7M22 22H28M25 19V25" stroke="#d22a1c" strokeWidth="1.600" /><path d="M29 29V25L25 29Z" fill="#000" /></I></ToolButton>
          <ToolButton><I><path d="M4 4H17V23H4Z" stroke="#d22a1c" strokeWidth="1.400" strokeDasharray="5 2" /><path d="M1 4H7M4 1V7M14 23H20M17 20V26" stroke="#d22a1c" strokeWidth="1.500" /><ellipse cx="9" cy="13" rx="3.200" ry="4" fill="#c11" /><ellipse cx="17" cy="13" rx="3.200" ry="4" fill="#c11" /><ellipse cx="25" cy="13" rx="3" ry="3.800" fill="#e0a030" stroke="#6b470c" /><path d="M29 29V25L25 29Z" fill="#000" /></I></ToolButton>
          <ToolButton $on><I><path d="M3 10 14 4 26 9V21L14 26 3 20Z" fill="#eda044" stroke="#7a4b10" /><path d="M3 10 14 4 26 9 14 14Z" fill="#f8cf92" /><path d="M3 10 14 14 26 9M14 14V26" stroke="#e8550c" strokeWidth="1.500" /><path d="M26 24 18 16M17 21V15H23" stroke="#15659f" strokeWidth="2.200" /></I></ToolButton>
        </ToolGroup>
        <ToolGroup $w={43} $ml={73}>
          <Grip $gap={5} />
          <ToolButton $w={28}><I><circle cx="14" cy="14" r="12.500" fill="#2e5fae" stroke="#9db5dc" strokeWidth="1.500" /><text x="11" y="22" fill="#fff" fontFamily="Liberation Serif, serif" fontStyle="italic" fontWeight="700" fontSize="22">i</text></I></ToolButton>
        </ToolGroup>
        <ToolGroup $w={135}>
          <Grip $gap={2} />
          <Overlap>格式:%s<Cube inner s={26} /></Overlap>
          <ToolButton $w={20}><Cube front="#fffdf6" s={25} /></ToolButton>
          <Gap $w={12} />
          <ToolButton $w={20}><Cube front="#f6cf5a" top="#fde48f" side="#cf9a26" s={25} /></ToolButton>
        </ToolGroup>
        <ToolGroup $w={109}>
          <Grip $gap={4} />
          <ToolButton $w={33}><I s={27}><path d="M3 9 10 2H25V19L18 26H3Z" fill="#9fb3dc" stroke="#27365c" strokeWidth="1.300" /><path d="M3 9H18V26M18 9 25 2M8 9V26M13 9V26M3 15H18L25 8M3 21H18L25 14M8 9 15 2M13 9 20 2M22 5V22" stroke="#27365c" /></I></ToolButton>
          <ToolButton $w={32}><I><path d="M3 9 10 2H25V19L18 26H3Z" fill="#a9b7de" /><path d="M3 9H18V26H3ZM3 9 10 2H25V19L18 26M18 9 25 2" stroke="#e0202c" strokeWidth="2" strokeDasharray="2 2.500" /></I></ToolButton>
          <ToolButton $w={34}><I><path d="M3 8 9 2H26V20L20 26H3Z" fill="#3fc23a" stroke="#145c14" strokeWidth="1.500" /><path d="M7 11 12 7H21V18L17 22H7Z" fill="#dbcf6b" stroke="#3b3a10" /><path d="M7 11H17V22M17 11 21 7M3 8H20V26M20 8 26 2" stroke="#145c14" /></I></ToolButton>
        </ToolGroup>
        <ToolGroup $w={271}>
          <Grip $gap={5} />
          <ToolButton><Ovals a="#fff" b="#e39a2c" /></ToolButton>
          <ToolButton><Ovals a="#e39a2c" b="#fff" /></ToolButton>
          <ToolButton><I><circle cx="14" cy="14" r="8.500" fill="#e8a02e" stroke="#8c5c14" /></I></ToolButton>
          <ToolButton><I><path d="M1 1H27V27H1Z" fill="#fff" stroke="#333" strokeWidth="1.500" /><path d="M1 1H27L1 27Z" fill="#e09a34" /><path d="M21 23Q22 12 11 8M14 3 6 6 12 13" stroke="#000" strokeWidth="3.400" /></I></ToolButton>
          <ToolButton><I><path d="M7 8Q20 3 22 14 22 21 16 25M6 3V9H12" stroke="#aaa" strokeWidth="1.600" /></I></ToolButton>
          <ToolButton><I><path d="M21 8Q8 3 6 14 6 21 12 25M22 3V9H16" stroke="#aaa" strokeWidth="1.600" /></I></ToolButton>
          <ToolButton><I><path d="M3 2H13V8H3ZM3 13H10V18H16V26H3ZM22 18H27V26H22Z" fill="#e39a2c" stroke="#8c5c14" /></I></ToolButton>
          <ToolButton><Manager /></ToolButton>
        </ToolGroup>
        <ToolGroup $w={266}>
          <Grip $gap={2} />
          <ToolButton $w={36}><I><path d="M14 2C24 2 27 9 26 16 25 23 18 27 15 25 12 23 15 20 11 19 5 18 2 15 3 9 4 5 8 2 14 2Z" fill="#e9b878" stroke="#7c5526" /><circle cx="9" cy="8" r="2.800" fill="#d11" /><circle cx="16" cy="7" r="2.600" fill="#f2d01c" /><circle cx="22" cy="13" r="2.800" fill="#1a2d8f" /><circle cx="20" cy="20" r="2.800" fill="#1f8f35" /><circle cx="9" cy="19" r="3" fill="#fff" stroke="#7c5526" /></I></ToolButton>
          <Combo $w={172}><ComboText>装配件默认值</ComboText><ComboButton><Down /></ComboButton></Combo>
          <ToolButton $w={34}><Cube front="#b99a5e" inner s={27} /></ToolButton>
          <ToolButton $w={12}><Tri /></ToolButton>
        </ToolGroup>
      </ToolRow>
      <ToolRow $h={35}>
        <ToolGroup $w={76} $ml={1364}>
          <Grip $gap={3} />
          <ToolButton><I><path d="M6 3H12V15H25V23H6Z" fill="#e39a2c" stroke="#5a3b0a" strokeWidth="1.400" /><path d="M17 15H25V23H17Z" fill="#fff" stroke="#222" /><path d="M17 0V29" stroke="#e02020" strokeWidth="2.200" strokeDasharray="3 2.500" /></I></ToolButton>
          <ToolButton><Manager /></ToolButton>
        </ToolGroup>
      </ToolRow>

      <Body>
        <LeftPanel>
          <Tabs><Tab $active>模型</Tab><Tab>结果</Tab></Tabs>
          <Panel>
            <PanelTools>
              <Combo $w={74} $h={28}>
                <I w={26} h={24} box="0 0 26 24"><g fill="#e3b524" stroke="#2b2205" strokeWidth="1.300"><path d="M4 15V19Q12 25 22 19V15Z" /><path d="M3 10V14Q12 20 21 14V10Z" /><path d="M4 5V9Q12 15 22 9V5Z" /><ellipse cx="13" cy="5" rx="9" ry="3.300" fill="#f4d868" /></g></I>
                <ComboText $pl={2}>模型</ComboText><ComboButton><Down /></ComboButton>
              </Combo>
              <Gap $w={8} />
              <I w={12} h={20} box="0 0 12 22"><path d="M0 8 6 1 12 8ZM0 14 6 21 12 14Z" fill="#9b9b9b" /></I>
              <Gap $w={12} />
              <I w={20} h={20} box="0 0 20 20"><path d="M1 4V2H7L9 4H19V17H1ZM6 10 9 7 12 10M9 7V13H14" stroke="#a0a0a0" strokeWidth="1.300" /></I>
              <Gap $w={12} />
              <I w={20} h={20} box="0 0 20 20"><path d="M2 2H6V6H2ZM9 5H13V9H9ZM8 11H12V15H8ZM14 14H18V18H14ZM6 4H9M4 6V12H8M12 13Q16 12 16 14" stroke="#a0a0a0" strokeWidth="1.300" /></I>
              <Gap $w={14} />
              <I w={20} h={24} box="0 0 20 24"><circle cx="10" cy="10" r="5" fill="#fbe36a" stroke="#866c0c" /><path d="M7.500 15H12.500V20H7.500Z" fill="#3d5a50" stroke="#111" /><path d="M10 0V2M3 3 4.500 4.500M17 3 15.500 4.500M0 10H2.500M20 10H17.500M3 16 4.500 15M17 16 15.500 15" stroke="#333" strokeWidth="1.600" /></I>
            </PanelTools>
            <TreeBox>
              <Tree>
                <Row $pad={3}><PlusMinus /><RowIcon>{treeIcon("model")}</RowIcon><RowText>模型<Latin> (1)</Latin></RowText></Row>
                <Row $pad={26}><PlusMinus /><RowText $root>Model-1</RowText></Row>
                {treeRows.map(([ic, t, l, ex]) => (
                  <Row key={ic + t} $pad={48}>{ex ? <PlusMinus plus /> : <Stub />}<RowIcon>{treeIcon(ic)}</RowIcon><RowText>{t}{l && <Latin>{l}</Latin>}</RowText></Row>
                ))}
              </Tree>
              <VBar>
                <ArrowCell><Scroll d="M1 8.500 6 3.500 11 8.500" /></ArrowCell><VThumb /><ArrowCell><Scroll d="M1 3.500 6 8.500 11 3.500" /></ArrowCell>
              </VBar>
              <HBar><Scroll d="M8 1.500 3 6 8 10.500" /><HThumb /><Scroll d="M4 1.500 9 6 4 10.500" /></HBar>
            </TreeBox>
          </Panel>
        </LeftPanel>
        <Right>
          <ContextBar>
            <CtxLabel $w={40}>模块:</CtxLabel>
            <Combo $w={122}><Spin /><ComboText $pl={3}>载荷</ComboText><ComboButton><Down /></ComboButton></Combo>
            <CtxLabel $w={57} $pl={17}>模型:</CtxLabel>
            <Combo $w={122}><Spin dim /><ComboText $pl={3} $ls={0.25}>Model-1</ComboText><ComboButton><Down /></ComboButton></Combo>
            <CtxLabel $w={72} $pl={17}>分析步:</CtxLabel>
            <Combo $w={122}><Spin dim2 /><ComboText $pl={3} $ls={0.1}>Step-1</ComboText><ComboButton><Down /></ComboButton></Combo>
          </ContextBar>
          <Work>
            <ToolBox>
              <ToolPair $h={33}><PairCell $on><LoadIcon arrow s={27} /></PairCell><PairCell><Manager /></PairCell></ToolPair>
              <ToolPair $h={50}><PairCell><LoadIcon feet s={26} /></PairCell><PairCell><Manager /></PairCell></ToolPair>
              <ToolPair $h={33}><PairCell><LoadIcon field s={26} /></PairCell><PairCell><Manager /></PairCell></ToolPair>
              <ToolPair $h={50}><PairCell><LoadIcon arrow feet s={26} /></PairCell><PairCell><Manager /></PairCell></ToolPair>
              <Rule $mt={-7} />
              <ToolPair $h={46}>
                <PairCell><I s={26}><path d="M2 18H23V25H2Z" fill="#efcf5e" stroke="#97762a" /><path d="M9 3H16V18H9Z" fill="#f2d76c" stroke="#97762a" /><path d="M9 6H20V18" stroke="#d22" strokeWidth="2" strokeDasharray="3 2" /></I><Corner /></PairCell>
                <PairCell><I s={26}><path d="M0 17H12V25H0Z" fill="#efcf5e" stroke="#97762a" /><path d="M4 2H9V17H4Z" fill="#f2d76c" stroke="#97762a" /><path d="M16 17H28V25H16Z" fill="#efcf5e" stroke="#97762a" /><path d="M12 10H18M17 7 20 10 17 13Z" stroke="#c22" strokeWidth="2" fill="#c22" /></I><Corner /></PairCell>
              </ToolPair>
              <ToolPair $h={26}>
                <PairCell><I s={26}><path d="M0 20H20V27H0Z" fill="#efcf5e" stroke="#97762a" /><path d="M7 20V3H14V17" stroke="#333" strokeWidth="1.500" strokeDasharray="2 2" /><path d="M14 9 21 1 27 6 19 13Z" fill="#eba53f" stroke="#7d5010" /><path d="M14 9 19 13 14 17 9 14Z" fill="#e68aa0" stroke="#834" /></I></PairCell>
              </ToolPair>
              <Rule $mt={5} />
              <ToolPair $h={48}>
                <PairCell><I><path d="M-1 5H4M16 5H28" stroke="#111" strokeWidth="2" /><path d="M6 5H14M10 1V10" stroke="#1a78e0" strokeWidth="2" /><path d="M14 9V23L18 20 21 27 24 26 21 18H26Z" fill="#fff" stroke="#222" strokeWidth="1.400" /></I><Corner /></PairCell>
                <PairCell><I s={26}><path d="M2 3H9V15H26V24H2Z" fill="#e8a94d" stroke="#8f6420" /><path d="M2 3H9V15H2Z" fill="#f1dc78" /><circle cx="7" cy="18" r="3.500" stroke="#e03a10" strokeWidth="1.700" /></I><Corner /></PairCell>
              </ToolPair>
              <ToolPair $h={23}>
                <PairCell><I s={26}><path d="M3 5 7 2H13V14L19 12H26V20L21 25H3Z" fill="#dcb548" stroke="#6f5414" /><path d="M5 5V22H19" stroke="#333" strokeDasharray="2 2" /><path d="M17 16 22 13V21L17 24Z" stroke="#d22" strokeWidth="2" /></I><Corner /></PairCell>
                <PairCell><I s={26}><path d="M2 1H9V12L15 18H2Z" fill="#eba850" stroke="#6d4710" /><path d="M12 11H21V17" fill="#eba850" stroke="#6d4710" /><path d="M9 9 22 23M18 17 18 24" stroke="#777" strokeWidth="2" /><circle cx="25" cy="23" r="3" stroke="#b22" strokeWidth="1.500" /><circle cx="18" cy="27" r="2.700" stroke="#b22" strokeWidth="1.500" /></I></PairCell>
              </ToolPair>
              <Rule $mt={6} />
              <ToolPair $h={46}>
                <PairCell><I><text x="-1" y="12" fill="#111" fontFamily="DejaVu Sans Mono, monospace" fontWeight="700" fontSize="11.500" textLength="30">(XYZ)</text><path d="M14 15V24M9.500 19.500H18.500" stroke="#1a78e0" strokeWidth="2" /></I><Corner /></PairCell>
                <PairCell><I><path d="M13 1V26" stroke="#1f7de0" strokeWidth="2.400" /><path d="M13 17 4 24M13 17 23 24" stroke="#222" strokeWidth="1.800" /><path d="M10 6 13 0 16 6ZM2 26 4 20 8 24ZM25 26 19 24 23 20Z" fill="#222" /></I><Corner /></PairCell>
              </ToolPair>
              <ToolPair $h={24}>
                <PairCell><I><path d="M6 3V11H15M6 11 2 15M7 1 6 3 4 5M13 9 15 11 13 13M2 23H14M4 21 1 23 4 25M12 21 15 23 12 25" stroke="#333" strokeWidth="1.700" /><path d="M18 9 25 3V16L18 22Z" fill="#f0b95a" stroke="#3e7fb8" strokeWidth="1.300" /></I><Corner /></PairCell>
                <PairCell><I><path d="M10 3V17" stroke="#1f7de0" strokeWidth="2" strokeDasharray="3 3" /><path d="M7 3H13M10 0V6M7 16H13M10 13V19M17 25H23M20 22V28" stroke="#d22" strokeWidth="1.600" /><path d="M9 17 4 23M11 17 16 22" stroke="#1f7de0" strokeWidth="1.600" /><path d="M2 20H6V24H2ZM14 20H17V23H14ZM8 8H12V12H8Z" fill="#1f6fe0" /></I><Corner /></PairCell>
              </ToolPair>
            </ToolBox>
            <Viewport><Scene /></Viewport>
          </Work>
          <Prompt>
            <PushButton $w={23}><I w={20} h={18} box="0 0 20 18"><path d="M0 9 8 1V6H19V12H8V17Z" fill="#000" /></I></PushButton>
            <PushButton $w={22} $ml={5}><I w={16} h={18} box="0 0 16 18"><path d="M2 2 14 15M13 1 1 16" stroke="#f5191d" strokeWidth="2.200" /></I></PushButton>
            <PromptText $w={334} $ml={8}>为载荷选择区域或者单击 "完成" 来使用整个模型</PromptText>
            <PromptText $w={13}>(</PromptText>
            <CheckBox /><FocusLabel>创建集合:</FocusLabel>
            <PromptText $w={14} $ml={9}>)</PromptText>
            <PushButton $w={38} $focus>完成</PushButton>
            <SetArea>
              <PushButton $w={34}>集...</PushButton>
              <Brand>
                <I w={25} h={26} box="0 0 25 26"><path d="M8 2Q16-1 16 4 15 9 7 11M7 12Q15 11 13 17 10 23 1 25L7 14M24 10Q17 8 16 13 16 16 20 18 22 23 13 23" stroke="#1b2a7b" strokeWidth="2" /></I>
                <Simulia>SIMULIA</Simulia>
              </Brand>
            </SetArea>
          </Prompt>
        </Right>
      </Body>

      <Messages>
        <MsgTabs>
          <MsgTab $active><I w={26} h={28} box="0 0 26 28"><path d="M3 1H25V24H3Z" fill="#deded2" stroke="#555" strokeWidth="1.500" /><path d="M1 27 3 20 10 14 13 17 6 24Z" fill="#d9a52c" stroke="#3c2c06" strokeWidth="1.200" /></I></MsgTab>
          <MsgTab><I w={30} h={28} box="0 0 30 28"><path d="M1 1H29V28H1Z" fill="#efdf6c" stroke="#222" strokeWidth="2" /><path d="M6 10 11 14.500 6 19M13 10 18 14.500 13 19M20 10 25 14.500 20 19" stroke="#222" strokeWidth="2" /></I></MsgTab>
        </MsgTabs>
        <MsgBox>
          <MsgLine><Wide>新的模型数据库已创建</Wide>.</MsgLine>
          <MsgLine><Wide>模型</Wide> "Model-1" <Wide>已创建</Wide>.</MsgLine>
          <MsgLine><Wide>模型数据库</Wide> "D:\temp\taiqiumoni.cae" <Wide>已打开</Wide>.</MsgLine>
        </MsgBox>
        <SizeGrip><I w={15} h={15} box="0 0 15 15"><path d="M11 0H14V3H11ZM11 6H14V9H11ZM5 6H8V9H5ZM11 12H14V15H11ZM5 12H8V15H5ZM-1 12H2V15H-1Z" fill="#b0b0b0" /></I></SizeGrip>
      </Messages>

      <Taskbar>
        <StartCell><I s={20} box="0 0 20 20"><path d="M0 3 9 1.500V9.500H0ZM10 1.300 20 0V9.500H10ZM0 10.500H9V18.500L0 17ZM10 10.500H20V20L10 18.700Z" fill="#fff" /></I></StartCell>
        <Search>
          <I s={20} box="0 0 21 21"><circle cx="13" cy="8" r="7" stroke="#222" strokeWidth="1.500" /><path d="M8 13 1 20" stroke="#222" strokeWidth="1.500" /></I>
          <SearchText>搜索</SearchText>
          <I w={76} h={32} box="0 0 76 32">
            <path d="M30 1Q34 12 44 15 34 18 30 29 26 18 16 15 26 12 30 1Z" fill="#fbbf17" stroke="#fbbf17" />
            <path d="M58 14Q60 19 65 20.500 60 22 58 27 56 22 51 20.500 56 19 58 14Z" fill="#f6b73c" />
            <path d="M7 21 9 25 11 26 8 28 6 31 4 28 1 26 5 25Z" fill="#18a4ee" stroke="#18a4ee" />
            <circle cx="50" cy="4" r="2.800" fill="#ee6a35" /><circle cx="73" cy="28" r="2.800" fill="#8ac63f" />
          </I>
        </Search>
        <TaskCell $w={59}><I s={20} box="0 0 20 20"><path d="M1 0V4H14V0M1 20V16H14V20M1 6H14V14H1ZM18.500 0V5M18.500 11V20" stroke="#fff" strokeWidth="1.400" /><path d="M17 6.500H20V9.500H17Z" fill="#fff" /></I></TaskCell>
        <TaskCell $w={68}>
          <I s={31} box="0 0 31 31">
            <defs><linearGradient id="eg" x1="0" y1="0" x2="1" y2=".3"><stop stopColor="#2bb5e8" /><stop offset=".6" stopColor="#35c1b8" /><stop offset="1" stopColor="#62d85a" /></linearGradient></defs>
            <path d="M1 13C3 4 9 0 16 0 25 0 31 7 31 13 31 18 27 21 22 21 17 21 17 18 19 16 19 10 13 8 9 9 5 9 2 11 1 13Z" fill="url(#eg)" />
            <path d="M1 13C3 9 8 8 12 10 8 14 9 25 18 27 24 28 29 22 30 22 27 28 22 31 16 31 7 31-1 24 1 13Z" fill="#0c69c2" />
            <path d="M12 10C8 14 9 25 18 27 23 28 28 24 29 22 21 25 12 21 12 10Z" fill="#124f9e" />
          </I>
        </TaskCell>
        <TaskCell $w={58}><I w={28} h={24} box="0 0 28 24"><path d="M0 3Q0 1 2 1H9L12 4H0Z" fill="#d99a16" /><path d="M0 4H28V23H0Z" fill="#ffd061" /><path d="M5 24V14Q5 12 7 12H21Q23 12 23 14V24H18V18H10V24Z" fill="#3b97dc" /></I></TaskCell>
        <TaskCell $w={64}><I w={30} h={30} box="0 0 30 30"><path d="M8 6V2H22V6" stroke="#38b6f1" strokeWidth="2.200" /><path d="M0 5H30V25Q30 29 26 29H4Q0 29 0 25Z" fill="#f2f2f2" /><path d="M9 11H14.500V16.500H9Z" fill="#f25022" /><path d="M15.500 11H21V16.500H15.500Z" fill="#7fba00" /><path d="M9 17.500H14.500V23H9Z" fill="#00a4ef" /><path d="M15.500 17.500H21V23H15.500Z" fill="#ffb900" /></I></TaskCell>
        <TaskCell $w={63}><I w={31} h={28} box="0 0 32 28"><path d="M6 9 18 0 31 10V24Q31 27 28 27H10Q6 27 6 24Z" fill="#1473c5" /><path d="M9 7 18 0 31 10 20 18Z" fill="#5ac0f7" /><path d="M31 11V24Q31 27 28 27H14Z" fill="#35b8f1" /><path d="M0 7H15V22H0Z" fill="#0f5fb4" /><circle cx="7.500" cy="14.500" r="4" stroke="#fff" strokeWidth="2.200" /></I></TaskCell>
        <TaskCell $w={5} />
        <TaskCell $w={51} $line><I w={28} h={26} box="0 0 28 26"><path d="M.7 .7H27.300V25.300H.7Z" fill="#0a0a0a" stroke="#b9b9b9" strokeWidth="1.400" /><path d="M1 2H27" stroke="#ddd" strokeWidth="2" /><path d="M3 6H5M6 5V7M8 6H10M11 5 13 7M14 7.500H18" stroke="#ccc" strokeWidth="1.100" /></I></TaskCell>
        <TaskCell $w={6} />
        <TaskCell $w={60} $on $line><AppIcon s={28} /></TaskCell>
        <Tray>
          <I w={28} h={29} box="0 0 28 29"><path d="M1 18Q16 15 22 5" stroke="#d6471c" strokeWidth="4" /><path d="M16 0H28V12L24 9 19 3Z" fill="#b9301a" /><path d="M0 25H5V29H0ZM8 23H13V29H8ZM15 19H20V29H15ZM23 14H28V29H23Z" fill="#d1421f" /></I>
          <Stock>富时中国A50</Stock>
          <Change>+1.90...</Change>
          <TrayCell $w={26}><I w={17} h={10} box="0 0 17 10"><path d="M1 9 8.500 1.500 16 9" stroke="#fff" strokeWidth="1.600" /></I></TrayCell>
          <TrayCell $w={31}><I w={21} h={14} box="0 0 21 14"><path d="M3 9Q4 0 10 1 16 1 16 7L8 10Z" fill="#9c9a97" /><path d="M3 14Q-2 9 4 7 8 3 12 7 20 5 21 11 20 14 17 14Z" fill="#fff" /></I></TrayCell>
          <TrayCell $w={31}><I w={20} h={12} box="0 0 20 12"><path d="M.7 .7H17.300V11.300H.7Z" stroke="#fff" strokeWidth="1.400" /><path d="M3 3H15V9H3Z" fill="#fff" stroke="#fff" /><path d="M18.500 3.500V8.500" stroke="#fff" strokeWidth="1.600" /></I></TrayCell>
          <TrayCell $w={29}><I w={16} h={16} box="0 0 16 16"><path d="M1 15Q2 3 15 1M4.500 15Q5 7 15 5M8 15Q9 10 15 9" stroke="#bbb" strokeWidth="1.300" /><path d="M12 13H15V15.500H12Z" fill="#fff" /></I></TrayCell>
          <TrayCell $w={29}><I w={20} h={16} box="0 0 20 16"><path d="M1 5H4L8 1.500V14.500L4 11H1Z" stroke="#fff" strokeWidth="1.300" /><path d="M11 6Q12.500 8 11 10" stroke="#fff" strokeWidth="1.300" /><path d="M14 4Q17 8 14 12M17 2Q21.500 8 17 14" stroke="#888" strokeWidth="1.200" /></I></TrayCell>
          <Ime>英</Ime>
          <Clock>0:03<br />2025/10/1</Clock>
          <Notice>
            <I w={20} h={20} box="0 0 20 20"><path d="M0 0H20V16H9L5 20V16H0Z" fill="#fff" /><path d="M4 5H16M4 8.500H16M4 12H12" stroke="#25211a" strokeWidth="1.300" /></I>
            <Badge>2</Badge>
          </Notice>
          <TrayCell $w={5} />
        </Tray>
      </Taskbar>
    </Screen>
  );
}
